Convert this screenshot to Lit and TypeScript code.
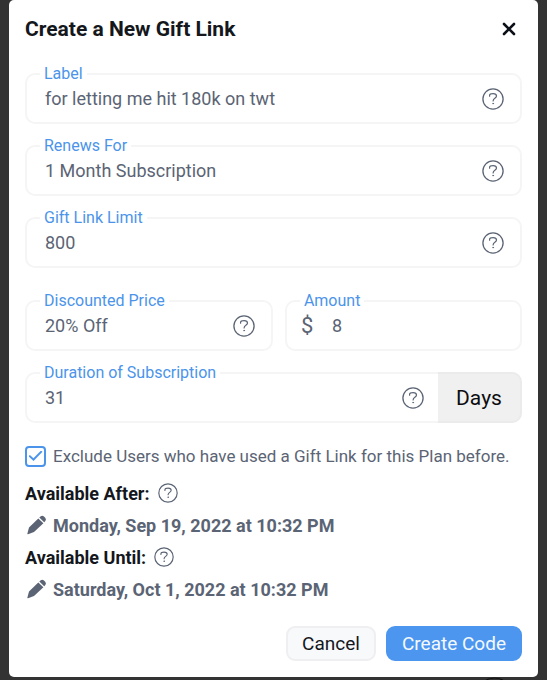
import { LitElement, html, css, svg, nothing } from "lit";
import { customElement, property } from "lit/decorators.js";

@customElement("help-icon")
class HelpIcon extends LitElement {
  static styles = css`
    :host {
      display: inline-flex;
      flex: none;
      width: 22px;
      height: 22px;
      color: #5b6474;
    }
    :host([small]) {
      width: 20px;
      height: 20px;
    }
    .glyph {
      width: 100%;
      height: 100%;
      fill: none;
      stroke: currentColor;
      stroke-linecap: round;
      stroke-linejoin: round;
    }
  `;

  render() {
    return html`<svg class="glyph" viewBox="0 0 22 22" aria-hidden="true">
      ${svg`<circle cx="11" cy="11" r="10.1" stroke-width="1.3"></circle>
      <path d="M7.6 8.2V7.3C7.6 6.1 8.8 5.6 11.1 5.6C13.4 5.6 14.5 6.6 14.5 8C14.5 10.4 11.1 10.2 11.1 12.9" stroke-width="1.2"></path>
      <circle cx="11.1" cy="15.6" r=".5" fill="currentColor" stroke-width=".6"></circle>`}
    </svg>`;
  }
}

@customElement("text-field")
class TextField extends LitElement {
  @property() label = "";
  @property() value = "";
  @property() prefixText = "";
  @property() suffix = "";
  @property({ type: Boolean }) help = false;

  static styles = css`
    :host {
      display: block;
      min-width: 0;
    }
    .field {
      position: relative;
      display: flex;
      align-items: stretch;
      box-sizing: border-box;
      height: 51px;
      border: 2px solid #f5f5f6;
      border-radius: 10px;
      background: #fff;
    }
    .caption {
      position: absolute;
      top: -11px;
      left: 13px;
      padding: 0 4px;
      background: #fff;
      color: #4b94ea;
      font-size: 16px;
      line-height: 20px;
      white-space: nowrap;
    }
    .prefix {
      flex: none;
      align-self: center;
      width: 31px;
      padding-left: 14px;
      color: #5b6474;
      font-size: 22px;
      line-height: 24px;
    }
    .input {
      flex: 1;
      min-width: 0;
      margin: 0;
      padding: 0 0 0 18px;
      border: 0;
      outline: 0;
      background: transparent;
      color: #5b6474;
      font: inherit;
      font-size: 18px;
    }
    .prefix + .input {
      padding-left: 0;
    }
    .help {
      align-self: center;
      margin: 0 16px 0 8px;
    }
    .suffix {
      display: flex;
      align-items: center;
      justify-content: center;
      flex: none;
      box-sizing: border-box;
      width: 84px;
      margin: -2px;
      border: 2px solid #ebebec;
      border-left: 0;
      border-radius: 0 10px 10px 0;
      background: #f0f0f0;
      color: #0d0d10;
      font-size: 21px;
    }
  `;

  render() {
    return html`<div class="field">
      <label class="caption" for="control">${this.label}</label>
      ${this.prefixText ? html`<span class="prefix">${this.prefixText}</span>` : nothing}
      <input class="input" id="control" type="text" .value=${this.value} />
      ${this.help ? html`<help-icon class="help"></help-icon>` : nothing}
      ${this.suffix ? html`<span class="suffix">${this.suffix}</span>` : nothing}
    </div>`;
  }
}

@customElement("date-entry")
class DateEntry extends LitElement {
  @property() label = "";
  @property() date = "";

  static styles = css`
    :host {
      display: block;
    }
    .heading,
    .date {
      display: flex;
      align-items: center;
      height: 32px;
      font-size: 18px;
      font-weight: 700;
    }
    .heading {
      gap: 8px;
      color: #14171c;
    }
    .date {
      gap: 6px;
      margin: 0;
      padding: 0 0 0 2px;
      border: 0;
      background: none;
      color: #5b6474;
      font-family: inherit;
    }
    .pencil {
      flex: none;
      width: 20px;
      height: 20px;
      fill: currentColor;
    }
  `;

  render() {
    return html`
      <div class="heading">${this.label}<help-icon small></help-icon></div>
      <button class="date" type="button">
        <svg class="pencil" viewBox="0 0 20 20" aria-hidden="true">
          <path d="M11.3 3.4L16.4 8.3L7 17L1 19.2Q.2 19.4.4 18.6L2 12.4Z M12.3 2.5L13.8 1.2Q15.5.1 17.2 1.7L18.2 2.8Q19.6 4.4 18.4 6L17.2 7.3Z"></path>
        </svg>
        ${this.date}
      </button>
    `;
  }
}

@customElement("app-root")
class AppRoot extends LitElement {
  static styles = css`
    :host {
      display: block;
      position: relative;
      box-sizing: border-box;
      min-height: 100vh;
      padding: 0 9px 3px;
      overflow: hidden;
      background: #333;
      font-family: Roboto, "Liberation Sans", sans-serif;
    }
    .dialog {
      position: relative;
      box-sizing: border-box;
      padding: 9px 16px 16px;
      border-radius: 5px;
      background: #fff;
    }
    .header {
      display: flex;
      align-items: center;
      justify-content: space-between;
      height: 40px;
      margin-bottom: 24px;
    }
    .title {
      margin: 0;
      color: #14171c;
      font-size: 21px;
      font-weight: 700;
    }
    .close {
      display: flex;
      margin: 0;
      padding: 6px;
      border: 0;
      background: none;
      color: #0c1018;
    }
    .cross {
      width: 14px;
      height: 14px;
      fill: none;
      stroke: currentColor;
      stroke-width: 2.6;
      stroke-linecap: round;
    }
    .fields {
      display: grid;
      gap: 21px;
    }
    .pair {
      display: grid;
      grid-template-columns: 23fr 22fr;
      gap: 12px;
      margin-top: 11px;
    }
    .exclude {
      display: flex;
      align-items: center;
      gap: 7px;
      height: 24px;
      margin: 21px 0 9px;
      color: #5b6474;
      font-size: 17px;
      white-space: nowrap;
    }
    .tick {
      flex: none;
      box-sizing: border-box;
      width: 21px;
      height: 21px;
      margin: 0;
      border: 2px solid #4b94ea;
      border-radius: 4px;
      appearance: none;
      background: #fff;
      display: grid;
      place-items: center;
    }
    .tick:checked::before {
      content: "";
      width: 14px;
      height: 11px;
      background: #4b94ea;
      clip-path: polygon(0 52%, 10% 40%, 35% 70%, 90% 0, 100% 12%, 36% 96%);
    }
    .actions {
      display: flex;
      justify-content: flex-end;
      gap: 10px;
      margin-top: 21px;
    }
    .button {
      box-sizing: border-box;
      height: 35px;
      margin: 0;
      padding: 0 14px;
      border: 2px solid #efeff1;
      border-radius: 9px;
      background: #f8f9fb;
      color: #14171c;
      font-family: inherit;
      font-size: 19px;
    }
    .primary {
      border-color: #4c96ef;
      background: #4c96ef;
      color: #f4f9ff;
    }
    .backdrop-mark {
      position: absolute;
      right: 43px;
      bottom: 0;
      width: 19px;
      height: 3px;
      fill: none;
      stroke: #111;
      stroke-width: 1;
    }
  `;

  render() {
    return html`
      <svg class="backdrop-mark" viewBox="0 0 19 3" aria-hidden="true">
        <path d="M1 3Q9.5 -1 18 3"></path>
      </svg>
      <form class="dialog" role="dialog" aria-labelledby="title">
        <div class="header">
          <h1 class="title" id="title">Create a New Gift Link</h1>
          <button class="close" type="button" aria-label="Close">
            <svg class="cross" viewBox="0 0 14 14" aria-hidden="true">
              <path d="M2 2L12 12M12 2L2 12"></path>
            </svg>
          </button>
        </div>
        <div class="fields">
          <text-field label="Label" value="for letting me hit 180k on twt" help></text-field>
          <text-field label="Renews For" value="1 Month Subscription" help></text-field>
          <text-field label="Gift Link Limit" value="800" help></text-field>
          <div class="pair">
            <text-field label="Discounted Price" value="20% Off" help></text-field>
            <text-field label="Amount" prefixText="$" value="8"></text-field>
          </div>
          <text-field label="Duration of Subscription" value="31" suffix="Days" help></text-field>
        </div>
        <label class="exclude">
          <input class="tick" type="checkbox" checked />
          Exclude Users who have used a Gift Link for this Plan before.
        </label>
        <date-entry label="Available After:" date="Monday, Sep 19, 2022 at 10:32 PM"></date-entry>
        <date-entry label="Available Until:" date="Saturday, Oct 1, 2022 at 10:32 PM"></date-entry>
        <div class="actions">
          <button class="button" type="button">Cancel</button>
          <button class="button primary" type="button">Create Code</button>
        </div>
      </form>
    `;
  }
}
